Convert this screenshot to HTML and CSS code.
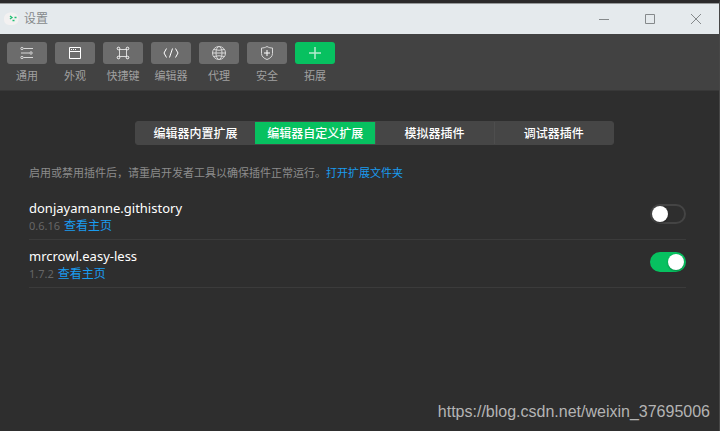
FILE: index.html
```html
<!DOCTYPE html>
<html lang="zh-CN">
<head>
<meta charset="utf-8">
<meta name="viewport" content="width=device-width, initial-scale=1">
<title>设置</title>
<link rel="stylesheet" href="styles.css">
</head>
<body>
<div class="window">
  <header class="titlebar">
    <svg class="logo" viewBox="0 0 16 16" aria-hidden="true">
      <path d="M1 8C1 4 3.500 1.500 8 1.500S15.500 4 15.500 8 13 14 8 14 1 12 1 8Z" fill="#f3f1f1"/>
      <path d="M7 5l2 1.500L7 8" fill="none" stroke="#1dbf73" stroke-width="1.300"/>
      <path d="M11.500 6.500h2M9.500 9.500h2" fill="none" stroke="#1dbf73" stroke-width="1.300"/>
    </svg>
    <h1 class="title">设置</h1>
    <div class="controls">
      <button class="control" aria-label="最小化"><svg viewBox="0 0 10 10"><path d="M0 5.500h10"/></svg></button>
      <button class="control" aria-label="最大化"><svg viewBox="0 0 10 10"><path d="M.5.5h9v9h-9z"/></svg></button>
      <button class="control" aria-label="关闭"><svg viewBox="0 0 10 10"><path d="M0 0l10 10M10 0L0 10"/></svg></button>
    </div>
  </header>

  <nav class="toolbar">
    <button class="tool"><span class="tool-icon"><svg viewBox="0 0 16 16"><path d="M4.500 3.500H14M2 8h8.500M4.500 12.500H14"/><circle cx="3" cy="3.500" r="1.200"/><circle cx="12" cy="8" r="1.200"/><circle cx="3" cy="12.500" r="1.200"/></svg></span>通用</button>
    <button class="tool"><span class="tool-icon strong"><svg viewBox="0 0 16 16"><path d="M2.500 2.500h11v11h-11zM2.500 6.500h11"/><path d="M4 4.500h1M6 4.500h1M8 4.500h1"/></svg></span>外观</button>
    <button class="tool"><span class="tool-icon"><svg viewBox="0 0 16 16"><path d="M4.500 4.500h7v7h-7z"/><g class="knots"><circle cx="3.500" cy="3.500" r="1.300"/><circle cx="12.500" cy="3.500" r="1.300"/><circle cx="3.500" cy="12.500" r="1.300"/><circle cx="12.500" cy="12.500" r="1.300"/></g></svg></span>快捷键</button>
    <button class="tool"><span class="tool-icon strong"><svg viewBox="0 0 16 16"><path d="M3.500 3.500L1 8l2.500 4.500M12.500 3.500L15 8l-2.500 4.500M9.500 3.500l-3 9"/></svg></span>编辑器</button>
    <button class="tool"><span class="tool-icon"><svg viewBox="0 0 16 16"><circle cx="8" cy="8" r="6.500"/><ellipse cx="8" cy="8" rx="3" ry="6.500"/><path d="M1.500 8h13M2.500 4.500q5.500 1.500 11 0M2.500 11.500q5.500-1.500 11 0"/></svg></span>代理</button>
    <button class="tool"><span class="tool-icon"><svg viewBox="0 0 16 16"><path d="M8 1.500c2 1.200 3.500 1.500 5.500 1.500v5.500c0 3-2.500 5-5.500 6-3-1-5.500-3-5.500-6V3C4.500 3 6 2.700 8 1.500z"/><path class="knots" d="M8 5v6M5 8h6"/></svg></span>安全</button>
    <button class="tool" aria-current="page"><span class="tool-icon active"><svg viewBox="0 0 16 16"><path d="M8 2v12M2 8h12" stroke-width="1.500"/></svg></span>拓展</button>
  </nav>

  <main class="content">
    <div class="tabs" role="tablist">
      <button class="tab" role="tab" aria-selected="false">编辑器内置扩展</button>
      <button class="tab" role="tab" aria-selected="true">编辑器自定义扩展</button>
      <button class="tab" role="tab" aria-selected="false">模拟器插件</button>
      <button class="tab" role="tab" aria-selected="false">调试器插件</button>
    </div>
    <p class="hint">启用或禁用插件后，请重启开发者工具以确保插件正常运行。<a href="#folder">打开扩展文件夹</a></p>
    <ul class="list">
      <li class="item">
        <div>
          <label class="name" for="githistory">donjayamanne.githistory</label>
          <p class="meta"><span class="version">0.6.16</span><a href="#githistory-home">查看主页</a></p>
        </div>
        <input class="switch" id="githistory" type="checkbox" role="switch">
      </li>
      <li class="item">
        <div>
          <label class="name" for="easyless">mrcrowl.easy-less</label>
          <p class="meta"><span class="version">1.7.2</span><a href="#easyless-home">查看主页</a></p>
        </div>
        <input class="switch" id="easyless" type="checkbox" role="switch" checked>
      </li>
    </ul>
  </main>
  <footer class="watermark">https://blog.csdn.net/weixin_37695006</footer>
</div>
</body>
</html>
```
FILE: styles.css
```css
* {
  box-sizing: border-box;
}

body {
  margin: 0;
  background: #2e2e2e;
  color: #fff;
  font-family: "Noto Sans", "Noto Sans CJK SC", sans-serif;
  font-size: 12px;
}

h1, p, ul {
  margin: 0;
  padding: 0;
}

button {
  margin: 0;
  padding: 0;
  border: 0;
  background: none;
  color: inherit;
  font: inherit;
}

a {
  color: #1a9cf0;
  text-decoration: none;
}

svg {
  fill: none;
  stroke: currentColor;
}

.window {
  display: flex;
  flex-direction: column;
  min-height: 100vh;
  border-top: 3px solid #2b2a2b;
  border-right: 1px solid #474747;
}

.titlebar {
  display: flex;
  align-items: center;
  height: 31px;
  padding-left: 3px;
  border-top: 1px solid #96999a;
  background: #e5eaed;
  color: #85898b;
}

.logo {
  width: 16px;
  height: 16px;
  stroke: none;
}

.title {
  margin-left: 5px;
  font-size: 12px;
  font-weight: 400;
  line-height: 18px;
}

.controls {
  display: flex;
  height: 100%;
  margin-left: auto;
}

.control {
  display: grid;
  place-items: center;
  width: 46px;
}

.control svg {
  width: 10px;
  height: 10px;
}

.toolbar {
  display: flex;
  gap: 8px;
  padding: 8px 7px 6px;
  border-bottom: 1px solid #383838;
  background: #424242;
}

.tool {
  display: flex;
  flex-direction: column;
  gap: 4px;
  align-items: center;
  width: 40px;
  color: #a0a0a0;
  font-size: 11px;
  line-height: 16px;
  white-space: nowrap;
}

.tool-icon {
  display: grid;
  place-items: center;
  width: 100%;
  height: 22px;
  border-radius: 3px;
  background: #6c6c6c;
  color: #d8d8d8;
}

.tool-icon svg {
  width: 16px;
  height: 16px;
}

.tool-icon.strong,
.knots {
  color: #fff;
  stroke: currentColor;
}

.tool-icon.active {
  background: #07c160;
  color: #b5eccf;
}

.content {
  flex: 1;
  padding: 30px 33px 0 29px;
}

.tabs {
  display: grid;
  grid-template-columns: repeat(4, 1fr);
  margin: 0 72px 0 106px;
  border: 1px solid #464646;
  border-radius: 3px;
  background: #464646;
}

.tab {
  padding-top: 2px;
  font-weight: 500;
  line-height: 20px;
}

.tab + .tab {
  border-left: 1px solid #4e4e4e;
}

.tab[aria-selected="true"] {
  border-color: #07c160;
  background: #07c160;
}

.hint {
  margin-top: 20px;
  color: #8c8c8c;
  font-size: 11px;
  line-height: 16px;
}

.list {
  margin-top: 11px;
  list-style: none;
}

.item {
  display: flex;
  align-items: flex-start;
  justify-content: space-between;
  height: 48px;
  padding-top: 7px;
  border-bottom: 1px solid #3b3b3b;
}

.name {
  display: block;
  font-size: 13px;
  line-height: 18px;
}

.meta {
  display: flex;
  gap: 4px;
  color: #666;
  line-height: 18px;
}

.version {
  font-size: 11px;
}

.switch {
  width: 36px;
  height: 20px;
  margin: 5px 0 0;
  border: 2px solid #444;
  border-radius: 10px;
  appearance: none;
}

.switch::before {
  display: block;
  width: 16px;
  height: 16px;
  border-radius: 50%;
  background: #fff;
  box-shadow: 0 1px 2px rgb(0 0 0 / 30%);
  content: "";
}

.switch:checked {
  border-color: #07c160;
  background: #07c160;
}

.switch:checked::before {
  margin-left: auto;
}

.watermark {
  padding: 0 9px 8px 0;
  color: #b4b4b4;
  font-family: "Liberation Sans", sans-serif;
  font-size: 16px;
  line-height: 22px;
  text-align: right;
}
```
